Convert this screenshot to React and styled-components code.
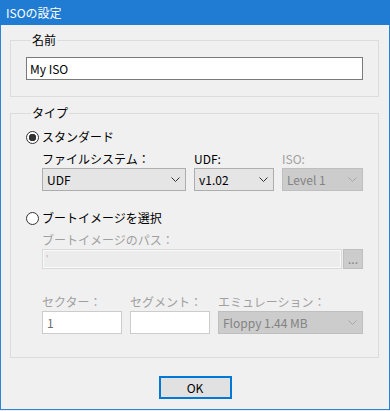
import React from "react";
import styled, { createGlobalStyle } from "styled-components";

const GlobalStyle = createGlobalStyle`
  html, body {
    margin: 0;
    padding: 0;
    background: #f0f0f0;
  }
  body {
    font-family: "Noto Sans CJK JP", "Noto Sans", sans-serif;
    font-size: 12px;
    color: #000;
  }
`;

function Chevron({ disabled }) {
  return (
    <svg width="9" height="5" viewBox="0 0 9 5">
      <path
        d="M0.5 0.5 L4.5 4.5 L8.5 0.5"
        fill="none"
        stroke={disabled ? "#a8a8a8" : "#333"}
        strokeWidth="1"
      />
    </svg>
  );
}

function Select({ value, width, disabled }) {
  return (
    <Combo $width={width} $disabled={disabled}>
      <span>{value}</span>
      <Chevron disabled={disabled} />
    </Combo>
  );
}

function App() {
  return (
    <>
      <GlobalStyle />
      <Window>
        <TitleBar>ISOの設定</TitleBar>
        <Body>
          <Group $top={7} $bottom={16}>
            <Legend>名前</Legend>
            <TextBox defaultValue="My ISO" />
          </Group>

          <Group $top={8} $bottom={23}>
            <Legend>タイプ</Legend>
            <Radio $checked>スタンダード</Radio>
            <Indent>
              <FieldRow>
                <Field>
                  <FieldLabel>ファイルシステム：</FieldLabel>
                  <Select value="UDF" width={144} />
                </Field>
                <Field>
                  <FieldLabel>UDF:</FieldLabel>
                  <Select value="v1.02" width={80} />
                </Field>
                <Field>
                  <FieldLabel $disabled>ISO:</FieldLabel>
                  <Select value="Level 1" width={81} disabled />
                </Field>
              </FieldRow>
            </Indent>

            <Radio $gap={19}>ブートイメージを選択</Radio>
            <Indent>
              <Field>
                <FieldLabel $disabled>ブートイメージのパス：</FieldLabel>
                <PathRow>
                  <PathBox>'</PathBox>
                  <Browse>...</Browse>
                </PathRow>
              </Field>
              <FieldRow $gap={19}>
                <Field>
                  <FieldLabel $disabled>セクター：</FieldLabel>
                  <SmallBox>1</SmallBox>
                </Field>
                <Field>
                  <FieldLabel $disabled>セグメント：</FieldLabel>
                  <SmallBox />
                </Field>
                <Field>
                  <FieldLabel $disabled>エミュレーション：</FieldLabel>
                  <Select value="Floppy 1.44 MB" width={145} disabled />
                </Field>
              </FieldRow>
            </Indent>
          </Group>

          <Footer>
            <OkButton>OK</OkButton>
          </Footer>
        </Body>
      </Window>
    </>
  );
}

export default App;

const Window = styled.div`
  box-sizing: border-box;
  width: 390px;
  height: 410px;
  border: 1px solid #2b84d6;
  background: #f0f0f0;
  display: flex;
  flex-direction: column;
`;

const TitleBar = styled.div`
  height: 25px;
  margin: -1px -1px 0;
  padding: 0 6px;
  background: #1f7cd2;
  color: #fff;
  font-size: 12px;
  line-height: 25px;
`;

const Body = styled.div`
  padding: 0 10px 0 9px;
  display: flex;
  flex-direction: column;
`;

const Group = styled.fieldset`
  margin: ${(p) => p.$top}px 0 0;
  padding: 8px 15px ${(p) => p.$bottom}px;
  border: 1px solid #dcdcdc;
  min-width: 0;
  display: flex;
  flex-direction: column;
`;

const Legend = styled.legend`
  padding: 0 1px;
  margin-left: 5px;
  font-size: 12px;
  line-height: 16px;
`;

const TextBox = styled.input`
  box-sizing: border-box;
  width: 337px;
  height: 23px;
  margin: 1px 0 0;
  padding: 0 3px;
  border: 1px solid #7a7a7a;
  background: #fff;
  font: inherit;
  font-size: 12px;
  color: #000;
  outline: none;
`;

const Radio = styled.div`
  display: flex;
  align-items: center;
  height: 16px;
  margin-top: ${(p) => p.$gap || 0}px;
  line-height: 16px;

  &::before {
    content: "";
    box-sizing: border-box;
    width: 13px;
    height: 13px;
    margin-right: 3px;
    border-radius: 50%;
    border: 1px solid #333;
    background: ${(p) =>
      p.$checked ? "radial-gradient(circle, #333 0 3.5px, #fff 4px)" : "#fff"};
  }
`;

const Indent = styled.div`
  padding-left: 16px;
  display: flex;
  flex-direction: column;
`;

const FieldRow = styled.div`
  display: flex;
  gap: 8px;
  margin-top: ${(p) => p.$gap || 0}px;
`;

const Field = styled.div`
  display: flex;
  flex-direction: column;
  margin-top: 6px;
`;

const FieldLabel = styled.div`
  height: 16px;
  line-height: 16px;
  margin-bottom: 1px;
  color: ${(p) => (p.$disabled ? "#a0a0a0" : "#000")};
  white-space: nowrap;
`;

const Combo = styled.div`
  box-sizing: border-box;
  width: ${(p) => p.$width}px;
  height: 23px;
  padding: 0 5px 0 4px;
  display: flex;
  align-items: center;
  justify-content: space-between;
  border: 1px solid ${(p) => (p.$disabled ? "#bfbfbf" : "#adadad")};
  background: ${(p) => (p.$disabled ? "#cccccc" : "#e5e5e5")};
  color: ${(p) => (p.$disabled ? "#838383" : "#000")};
  white-space: nowrap;
`;

const PathRow = styled.div`
  display: flex;
  gap: 1px;
`;

const PathBox = styled.div`
  box-sizing: border-box;
  width: 300px;
  height: 20px;
  padding: 0 3px;
  border: 1px solid #d9d9d9;
  box-shadow: inset 0 0 0 1px #fafafa;
  background: #ececec;
  color: #c8a8a8;
  line-height: 18px;
  font-size: 9px;
`;

const Browse = styled.div`
  box-sizing: border-box;
  width: 20px;
  height: 20px;
  border: 1px solid #bfbfbf;
  background: #cccccc;
  color: #838383;
  text-align: center;
  line-height: 18px;
`;

const SmallBox = styled.div`
  box-sizing: border-box;
  width: ${(p) => p.$width || 80}px;
  height: 23px;
  padding: 0 4px;
  border: 1px solid #cccccc;
  background: #fff;
  color: #6d6d6d;
  line-height: 21px;
`;

const Footer = styled.div`
  display: flex;
  justify-content: center;
  margin-top: 18px;
`;

const OkButton = styled.button`
  box-sizing: border-box;
  width: 73px;
  height: 23px;
  margin-left: 1px;
  padding: 0;
  border: 2px solid #0078d7;
  background: #e1e1e1;
  font: inherit;
  font-size: 12px;
  color: #000;
`;
